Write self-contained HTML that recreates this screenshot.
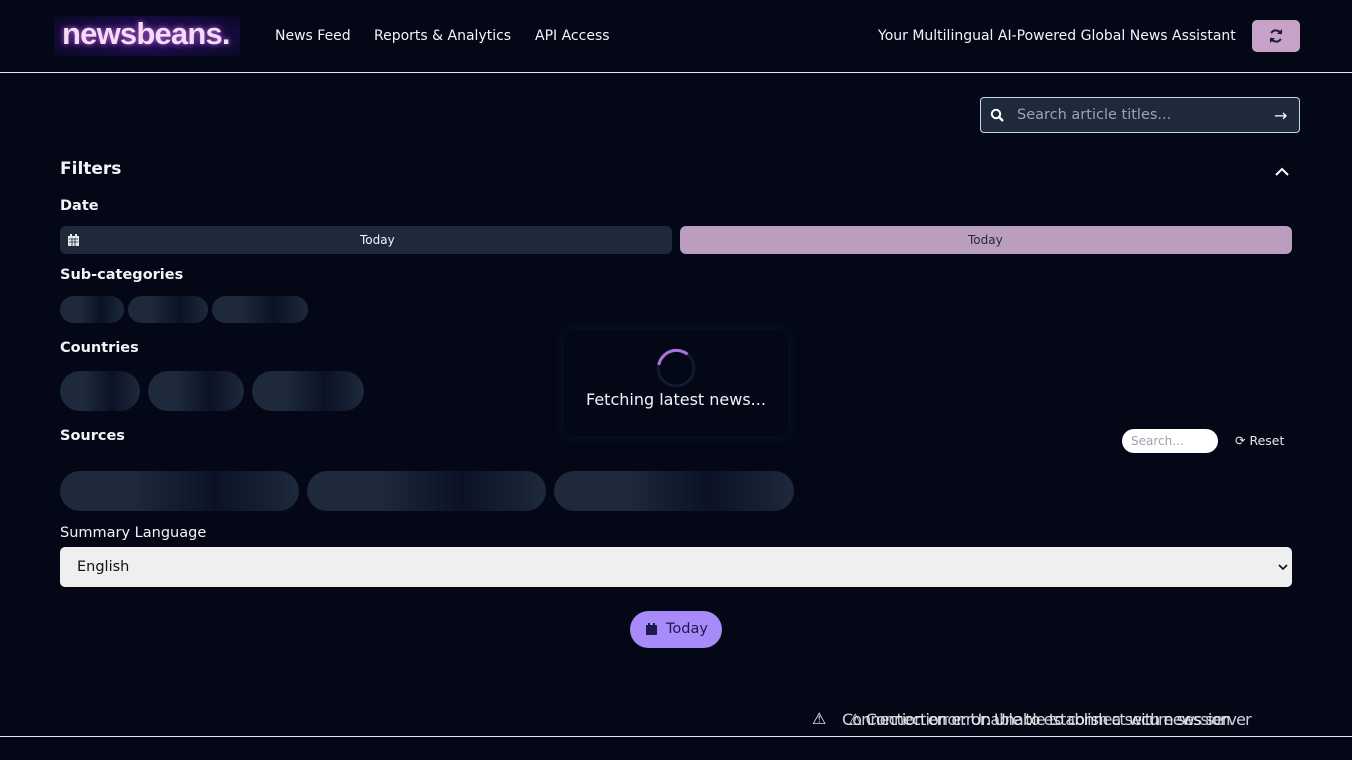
<!DOCTYPE html>
<html><head><meta charset="utf-8"><style>
*{box-sizing:border-box;margin:0;padding:0}
body{width:1352px;height:760px;background:#040816;color:#f1f5f9;font-family:"DejaVu Sans","Liberation Sans",sans-serif;position:relative;overflow:hidden;font-size:14px}
.a{position:absolute}
.hdr{left:0;top:0;width:1352px;height:73px;border-bottom:1px solid #e5e7eb}
.nav{top:28px;font-size:14px;color:#f1f5f9}
.sk{position:absolute;border-radius:20px;background:linear-gradient(90deg,#1e293b 0%,#1e293b 30%,#0b1226 65%,#1e293b 100%)}
h3{position:absolute;font-size:14.5px;font-weight:bold}
</style></head><body>
<div class="a hdr"></div>
<div class="a" style="left:54px;top:16px;width:186px;height:40px;background:radial-gradient(ellipse at center,#2a1466 0%,#160b40 60%,#070a20 100%)"></div>
<div class="a" style="left:62px;top:16px;font-family:'Liberation Sans',sans-serif;font-weight:bold;font-size:31px;letter-spacing:-0.8px;color:#f3dcf5;text-shadow:0 0 6px #c25cd6">newsbeans.</div>
<div class="a nav" style="left:275px">News Feed</div>
<div class="a nav" style="left:374px">Reports &amp; Analytics</div>
<div class="a nav" style="left:535px">API Access</div>
<div class="a nav" style="left:878px">Your Multilingual AI-Powered Global News Assistant</div>
<div class="a" style="left:1252px;top:20px;width:48px;height:32px;background:#c8a2c8;border-radius:5px"></div>
<svg class="a" style="left:1268px;top:28px" width="16" height="16" viewBox="0 0 16 16"><path d="M13 6A5.5 5.5 0 0 0 3.2 5M3 10a5.5 5.5 0 0 0 9.8 1" stroke="#1e1b2e" stroke-width="2" fill="none"/><path d="M14 1v5H9zM2 15v-5h5z" fill="#1e1b2e"/></svg>

<div class="a" style="left:980px;top:97px;width:320px;height:36px;background:#1e293b;border:1px solid #cbd5e1;border-radius:4px"></div>
<svg class="a" style="left:990px;top:108px" width="14" height="14" viewBox="0 0 14 14"><circle cx="6" cy="6" r="4.2" stroke="#fff" stroke-width="2" fill="none"/><path d="M9 9l4 4" stroke="#fff" stroke-width="2.4"/></svg>
<div class="a" style="left:1017px;top:107px;font-size:14.5px;color:#9ca3af">Search article titles...</div>
<div class="a" style="left:1274px;top:106px;font-size:16px;color:#fff">→</div>

<h3 style="left:60px;top:159px;font-size:17px">Filters</h3>
<svg class="a" style="left:1274px;top:166px" width="16" height="12" viewBox="0 0 16 12"><path d="M2 9l6-6 6 6" stroke="#fff" stroke-width="2" fill="none"/></svg>
<h3 style="left:60px;top:198px">Date</h3>
<div class="a" style="left:60px;top:226px;width:612px;height:28px;background:#1e293b;border-radius:6px"></div>
<svg class="a" style="left:68px;top:234px" width="11" height="12" viewBox="0 0 11 12"><rect x="0" y="2" width="11" height="10" fill="#e5e7eb"/><rect x="2" y="0" width="2" height="3" fill="#e5e7eb"/><rect x="7" y="0" width="2" height="3" fill="#e5e7eb"/><path d="M1 5h9M1 8h9M4 4v8M7 4v8" stroke="#1e293b" stroke-width=".8"/></svg>
<div class="a" style="left:360px;top:233px;font-size:12px">Today</div>
<div class="a" style="left:680px;top:226px;width:612px;height:28px;background:#bb9ebf;border-radius:6px"></div>
<div class="a" style="left:968px;top:233px;font-size:12px;color:#1f2937">Today</div>

<h3 style="left:60px;top:267px">Sub-categories</h3>
<div class="sk" style="left:60px;top:296px;width:64px;height:27px;border-radius:14px"></div>
<div class="sk" style="left:128px;top:296px;width:80px;height:27px;border-radius:14px"></div>
<div class="sk" style="left:212px;top:296px;width:96px;height:27px;border-radius:14px"></div>

<h3 style="left:60px;top:340px">Countries</h3>
<div class="sk" style="left:60px;top:371px;width:80px;height:40px"></div>
<div class="sk" style="left:148px;top:371px;width:96px;height:40px"></div>
<div class="sk" style="left:252px;top:371px;width:112px;height:40px"></div>

<div class="a" style="left:564px;top:330px;width:224px;height:106px;background:#040816;box-shadow:0 0 12px rgba(20,30,60,.5);border-radius:6px"></div>
<svg class="a" style="left:655px;top:347px" width="42" height="42" viewBox="0 0 42 42"><circle cx="21" cy="21" r="18" stroke="#111a2e" stroke-width="3" fill="none"/><path d="M3.5 21A18 18 0 0 1 30 5.5" stroke="#a874d8" stroke-width="3" fill="none" transform="rotate(10 21 21)"/></svg>
<div class="a" style="left:586px;top:390px;font-size:16px">Fetching latest news...</div>

<h3 style="left:60px;top:428px">Sources</h3>
<div class="a" style="left:1122px;top:429px;width:96px;height:24px;background:#fff;border-radius:12px"></div>
<div class="a" style="left:1131px;top:434px;font-size:12px;color:#9ca3af">Search...</div>
<div class="a" style="left:1235px;top:433px;font-size:12.5px;color:#e5e7eb">⟳ Reset</div>
<div class="sk" style="left:60px;top:471px;width:239px;height:40px"></div>
<div class="sk" style="left:307px;top:471px;width:239px;height:40px"></div>
<div class="sk" style="left:554px;top:471px;width:240px;height:40px"></div>

<div class="a" style="left:60px;top:525px;font-size:14.5px">Summary Language</div>
<div class="a" style="left:60px;top:547px;width:1232px;height:40px;background:#efefef;border-radius:5px"></div>
<div class="a" style="left:77px;top:559px;font-size:14.5px;color:#111">English</div>
<svg class="a" style="left:1278px;top:563px" width="10" height="8" viewBox="0 0 10 8"><path d="M1 2l4 4 4-4" stroke="#111" stroke-width="1.6" fill="none"/></svg>

<div class="a" style="left:630px;top:611px;width:92px;height:37px;background:#a78bfa;border-radius:19px"></div>
<svg class="a" style="left:646px;top:623px" width="11" height="12" viewBox="0 0 11 12"><rect x="0" y="2" width="11" height="10" rx="1" fill="#1e1b4b"/><rect x="2" y="0" width="2" height="3" fill="#1e1b4b"/><rect x="7" y="0" width="2" height="3" fill="#1e1b4b"/></svg>
<div class="a" style="left:666px;top:621px;font-size:14.5px;color:#1e1b4b">Today</div>

<div class="a" style="left:790px;top:700px;width:546px;height:35px;background:#040816"></div>
<div class="a" style="left:0;top:736px;width:1352px;height:1px;background:#e5e7eb"></div>
<div class="a" style="left:812px;top:709px;font-size:16px">⚠</div>
<div class="a" style="left:842px;top:710px;font-size:16px;letter-spacing:-0.9px;opacity:.85">Connection error: Unable to establish a secure session</div>
<div class="a" style="left:848px;top:710px;font-size:16px;letter-spacing:-0.9px;opacity:.85">⚠ Connection error: Unable to connect with news server</div>
</body></html>
